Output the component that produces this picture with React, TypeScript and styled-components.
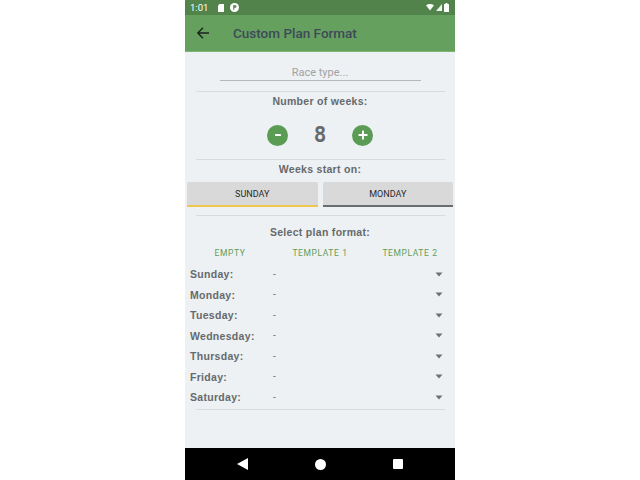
import React, { useState } from "react";
import styled, { createGlobalStyle, css } from "styled-components";

const days = [
  "Sunday",
  "Monday",
  "Tuesday",
  "Wednesday",
  "Thursday",
  "Friday",
  "Saturday",
];

const tabs = ["EMPTY", "TEMPLATE 1", "TEMPLATE 2"];

const App = () => {
  const [weeks, setWeeks] = useState(8);
  const [startDay, setStartDay] = useState("SUNDAY");

  return (
    <>
      <GlobalStyle />
      <Phone>
        <StatusBar>
          <StatusLeft>
            <Clock>1:01</Clock>
            <svg width="6" height="8" viewBox="0 0 6 8">
              <path d="M1.5 0H6V8H0V1.5Z" fill="#fff" />
            </svg>
            <svg width="9" height="9" viewBox="0 0 9 9">
              <circle cx="4.5" cy="4.5" r="4.5" fill="#fff" />
              <path d="M3.2 2.2H5.2A1.3 1.3 0 0 1 5.2 4.8H4.3V6.8H3.2Z" fill="#51834b" />
            </svg>
          </StatusLeft>
          <StatusRight>
            <svg width="8" height="7" viewBox="0 0 8 7">
              <path d="M0 1.2Q4 -1.2 8 1.2L4 6.5Z" fill="#fff" />
            </svg>
            <svg width="6" height="7" viewBox="0 0 6 7">
              <path d="M6 0V7H0Z" fill="#fff" opacity="0.9" />
            </svg>
            <svg width="5" height="9" viewBox="0 0 5 9">
              <rect x="1.5" y="0" width="2" height="1" fill="#fff" />
              <rect x="0" y="1" width="5" height="8" rx="0.5" fill="#fff" />
            </svg>
          </StatusRight>
        </StatusBar>
        <AppBar>
          <svg width="14" height="14" viewBox="0 0 14 14">
            <path
              d="M13 7H1.8M7 1.8L1.8 7L7 12.2"
              fill="none"
              stroke="#1d2320"
              strokeWidth="1.4"
            />
          </svg>
          <Title>Custom Plan Format</Title>
        </AppBar>
        <Content>
          <RaceInput placeholder="Race type..." />
          <Divider />
          <SectionLabel>Number of weeks:</SectionLabel>
          <Stepper>
            <RoundButton onClick={() => setWeeks(Math.max(1, weeks - 1))}>
              <svg width="10" height="10" viewBox="0 0 10 10">
                <rect x="2" y="4" width="6" height="2" rx="0.5" fill="#fff" />
              </svg>
            </RoundButton>
            <WeekCount>{weeks}</WeekCount>
            <RoundButton onClick={() => setWeeks(weeks + 1)}>
              <svg width="12" height="12" viewBox="0 0 12 12">
                <rect x="1.5" y="5" width="9" height="2" rx="0.5" fill="#fff" />
                <rect x="5" y="1.5" width="2" height="9" rx="0.5" fill="#fff" />
              </svg>
            </RoundButton>
          </Stepper>
          <Divider $top={13} />
          <SectionLabel>Weeks start on:</SectionLabel>
          <ToggleRow>
            {["SUNDAY", "MONDAY"].map((d) => (
              <ToggleButton
                key={d}
                $active={startDay === d}
                onClick={() => setStartDay(d)}
              >
                {d}
              </ToggleButton>
            ))}
          </ToggleRow>
          <Divider $top={8} />
          <SectionLabel $top={10}>Select plan format:</SectionLabel>
          <Tabs>
            {tabs.map((t) => (
              <Tab key={t}>{t}</Tab>
            ))}
          </Tabs>
          <DayList>
            {days.map((d) => (
              <DayRow key={d}>
                <DayLabel>{d}:</DayLabel>
                <DayValue>-</DayValue>
                <svg width="8" height="5" viewBox="0 0 8 5">
                  <path d="M0.5 0.5H7.5L4 4.5Z" fill="#707070" />
                </svg>
              </DayRow>
            ))}
          </DayList>
          <Divider $top={1} />
        </Content>
        <NavBar>
          <svg width="11" height="12" viewBox="0 0 11 12">
            <path d="M11 0V12L0 6Z" fill="#fff" />
          </svg>
          <svg width="11" height="11" viewBox="0 0 11 11">
            <circle cx="5.5" cy="5.5" r="5.5" fill="#fff" />
          </svg>
          <svg width="10" height="10" viewBox="0 0 10 10">
            <rect width="10" height="10" rx="1" fill="#fff" />
          </svg>
        </NavBar>
      </Phone>
    </>
  );
};

export default App;

const GlobalStyle = createGlobalStyle`
  html, body {
    margin: 0;
    padding: 0;
    background: #ffffff;
  }
  body {
    font-family: "Liberation Sans", Arial, sans-serif;
  }
`;

const labelFont = css`
  font-family: "Liberation Sans", Arial, sans-serif;
  font-weight: 700;
  font-size: 10.5px;
  letter-spacing: 0.3px;
  color: #666a6c;
`;

const Phone = styled.div`
  width: 270px;
  height: 480px;
  margin: 0 auto;
  display: flex;
  flex-direction: column;
  background: #edf1f4;
  overflow: hidden;
`;

const StatusBar = styled.div`
  height: 15px;
  background: #51834b;
  display: flex;
  align-items: center;
  justify-content: space-between;
  padding: 0 6px 0 5px;
`;

const StatusLeft = styled.div`
  display: flex;
  align-items: center;
  gap: 6px;
`;

const StatusRight = styled.div`
  display: flex;
  align-items: center;
  gap: 2px;
`;

const Clock = styled.span`
  font-family: Roboto, "Liberation Sans", sans-serif;
  font-size: 9.5px;
  color: #ffffff;
  margin-right: 4px;
`;

const AppBar = styled.div`
  height: 36px;
  background: #65a05e;
  border-bottom: 1px solid #7cb574;
  display: flex;
  align-items: center;
  padding-left: 11px;
  gap: 23px;
`;

const Title = styled.span`
  font-family: Roboto, "Liberation Sans", sans-serif;
  font-weight: 500;
  font-size: 13.5px;
  color: #3e4a5a;
`;

const Content = styled.div`
  flex: 1;
  display: flex;
  flex-direction: column;
  align-items: center;
`;

const RaceInput = styled.input`
  width: 201px;
  height: 15px;
  margin-top: 13px;
  border: none;
  border-bottom: 1px solid #b3b8bb;
  background: transparent;
  text-align: center;
  font-family: Roboto, "Liberation Sans", sans-serif;
  font-size: 11px;
  color: #444;
  padding: 0;
  outline: none;
  &::placeholder {
    color: #9ea3a6;
  }
`;

const Divider = styled.div<{ $top?: number }>`
  width: 249px;
  height: 1px;
  background: #d8dcdf;
  margin-top: ${({ $top }) => $top ?? 10}px;
`;

const SectionLabel = styled.div<{ $top?: number }>`
  ${labelFont};
  margin-top: ${({ $top }) => $top ?? 3}px;
  line-height: 12px;
`;

const Stepper = styled.div`
  display: flex;
  align-items: center;
  gap: 25px;
  margin-top: 17px;
  height: 22px;
`;

const RoundButton = styled.button`
  width: 21px;
  height: 21px;
  border-radius: 50%;
  border: none;
  padding: 0;
  background: #5b9c55;
  display: flex;
  align-items: center;
  justify-content: center;
  cursor: pointer;
`;

const WeekCount = styled.span`
  font-family: "DejaVu Sans Mono", "Liberation Mono", monospace;
  font-weight: 700;
  font-size: 21px;
  color: #676a6c;
  width: 14px;
  text-align: center;
  line-height: 22px;
`;

const ToggleRow = styled.div`
  width: 266px;
  display: flex;
  gap: 5px;
  margin-top: 7px;
`;

const ToggleButton = styled.button<{ $active: boolean }>`
  flex: 1;
  height: 25px;
  border: none;
  border-radius: 2px 2px 0 0;
  border-bottom: 2px solid ${({ $active }) => ($active ? "#efc64e" : "#6a6d6f")};
  background: #d9d9d9;
  font-family: Roboto, "Liberation Sans", sans-serif;
  font-size: 9px;
  color: #2a2a2a;
  padding: 0;
  cursor: pointer;
`;

const Tabs = styled.div`
  width: 100%;
  display: grid;
  grid-template-columns: repeat(3, 1fr);
  margin-top: 9px;
`;

const Tab = styled.div`
  text-align: center;
  font-family: Roboto, "Liberation Sans", sans-serif;
  font-size: 8.5px;
  letter-spacing: 0.6px;
  color: #5f9e58;
  line-height: 12px;
`;

const DayList = styled.div`
  width: 100%;
  display: flex;
  flex-direction: column;
  margin-top: 5px;
`;

const DayRow = styled.div`
  height: 20.5px;
  display: grid;
  grid-template-columns: 83px 1fr auto;
  align-items: center;
  padding: 0 12px 0 5px;
`;

const DayLabel = styled.span`
  ${labelFont};
`;

const DayValue = styled.span`
  font-family: Roboto, "Liberation Sans", sans-serif;
  font-size: 10px;
  color: #777;
`;

const NavBar = styled.div`
  height: 32px;
  background: #000000;
  display: flex;
  align-items: center;
  justify-content: center;
  gap: 67px;
`;
